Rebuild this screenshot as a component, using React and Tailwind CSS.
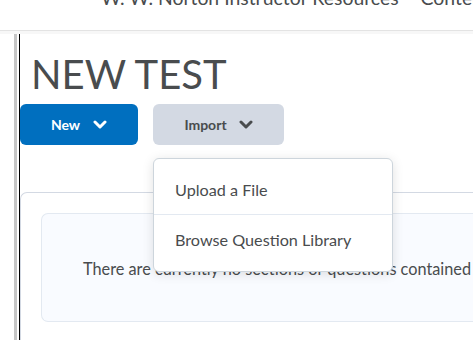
const font = { fontFamily: '"Lato", "Noto Sans", sans-serif' }

function Chevron({ className }) {
  return (
    <svg viewBox="0 0 14 10" className={className} fill="none">
      <polyline points="2,2 7,7 12,2" stroke="currentColor" strokeWidth="3"
                strokeLinecap="round" strokeLinejoin="round" />
    </svg>
  )
}

export default function App() {
  return (
    <div className="w-[473px] h-[340px] overflow-hidden bg-white text-[#494c4e]"
         style={font}>

      {/* Top nav, mostly scrolled off */}
      <div className="h-[31px] overflow-hidden border-b border-[#e3e3e3]">
        <div className="-mt-[14px] pl-[101px] text-[19.4px] leading-[23px] whitespace-nowrap flex gap-[22px]">
          <span>W. W. Norton Instructor Resources</span>
          <span>Content</span>
        </div>
      </div>
      <div className="h-[3px] bg-[#f7f7f7]" />

      <div className="flex h-[306px]">
        {/* Left gutter */}
        <div className="w-[14px]" />
        <div className="w-[3px] bg-[#c6c6c6]" />
        <div className="w-[2px]" />
        <div className="w-px bg-black" />

        {/* Content */}
        <div className="relative flex-1 min-w-0">
          <h1 className="pt-[20px] pl-[11px] text-[40px] leading-[40px] font-normal text-[#494c4e]">
            NEW TEST
          </h1>

          <div className="flex gap-[15px] mt-[10px]">
            <button className="w-[118px] h-[41px] rounded-[6px] bg-[#006fbf] text-white
                               text-[14px] font-bold flex items-center justify-center gap-[13px]">
              New
              <Chevron className="w-[14px] h-[10px]" />
            </button>
            <button className="w-[131px] h-[41px] rounded-[6px] bg-[#d3d9e3] text-[#494c4e]
                               text-[14px] font-bold flex items-center justify-center gap-[12px]">
              Import
              <Chevron className="w-[14px] h-[10px]" />
            </button>
          </div>

          {/* Questions panel */}
          <div className="mt-[47px] border-t border-l border-[#d3d9e3] rounded-tl-[7px] pt-[20px] pl-[20px] h-[200px]">
            <div className="h-[109px] border border-r-0 border-[#e3e9f1] rounded-l-[7px] bg-[#f9fbff]
                            flex items-center pl-[41px] pt-[3px]">
              <p className="text-[16.3px] whitespace-nowrap">
                There are currently no sections or questions contained in this test.
              </p>
            </div>
          </div>

          {/* Import dropdown */}
          <div className="absolute left-[133px] top-[124px] w-[240px] bg-white border border-[#cdd5dc]
                          rounded-[6px] shadow-[0_2px_12px_rgba(0,0,0,0.12)] text-[16.2px]">
            <div className="h-[56px] flex items-center pl-[21px] pt-[8px] border-b border-[#e3e9f1]">
              Upload a File
            </div>
            <div className="h-[56px] flex items-center pl-[21px] pb-[6px]">
              Browse Question Library
            </div>
          </div>
        </div>
      </div>
    </div>
  )
}
